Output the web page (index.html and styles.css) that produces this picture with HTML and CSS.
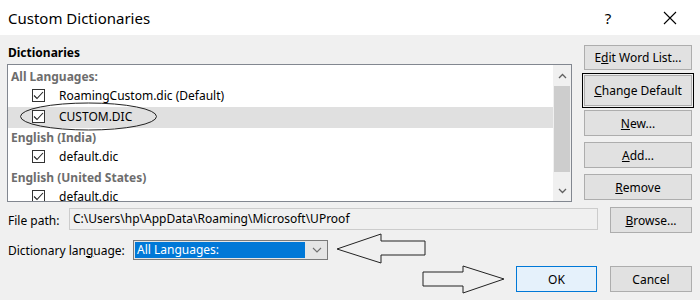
FILE: index.html
```html
<!DOCTYPE html>
<html lang="en">
<head>
    <meta charset="UTF-8">
    <title>Custom Dictionaries</title>
    <link rel="stylesheet" href="styles.css">
</head>
<body>
<div class="window">
    <div class="titlebar">
        <span class="title">Custom Dictionaries</span>
        <span class="title-help">?</span>
        <span class="title-close">
            <svg width="14" height="14" viewBox="0 0 14 14"><path d="M1 1 L13 13 M13 1 L1 13" stroke="#000" stroke-width="1.1" fill="none"/></svg>
        </span>
    </div>

    <div class="dialog">
        <div class="top-section">
            <div class="dict-column">
                <div class="group-label">Dictionaries</div>
                <div class="listbox">
                    <div class="list-rows">
                        <div class="list-header">All Languages:</div>
                        <div class="list-item"><span class="checkbox"><svg width="11" height="9" viewBox="0 0 11 9"><path d="M1 4.5 L4 7.5 L10 1" stroke="#222" stroke-width="1.1" fill="none"/></svg></span>RoamingCustom.dic (Default)</div>
                        <div class="list-item selected"><span class="checkbox"><svg width="11" height="9" viewBox="0 0 11 9"><path d="M1 4.5 L4 7.5 L10 1" stroke="#222" stroke-width="1.1" fill="none"/></svg></span>CUSTOM.DIC</div>
                        <div class="list-header">English (India)</div>
                        <div class="list-item"><span class="checkbox"><svg width="11" height="9" viewBox="0 0 11 9"><path d="M1 4.5 L4 7.5 L10 1" stroke="#222" stroke-width="1.1" fill="none"/></svg></span>default.dic</div>
                        <div class="list-header">English (United States)</div>
                        <div class="list-item"><span class="checkbox"><svg width="11" height="9" viewBox="0 0 11 9"><path d="M1 4.5 L4 7.5 L10 1" stroke="#222" stroke-width="1.1" fill="none"/></svg></span>default.dic</div>
                    </div>
                    <div class="scrollbar">
                        <div class="scroll-arrow">
                            <svg width="9" height="6" viewBox="0 0 9 6"><path d="M1 5 L4.5 1.5 L8 5" stroke="#606060" stroke-width="1.3" fill="none"/></svg>
                        </div>
                        <div class="scroll-track"><div class="scroll-thumb"></div></div>
                        <div class="scroll-arrow">
                            <svg width="9" height="6" viewBox="0 0 9 6"><path d="M1 1 L4.5 4.5 L8 1" stroke="#606060" stroke-width="1.3" fill="none"/></svg>
                        </div>
                    </div>
                </div>
            </div>
            <div class="side-buttons">
                <button class="btn btn-edit">E<u>d</u>it Word List...</button>
                <button class="btn btn-default">Change Default</button>
                <button class="btn btn-new"><u>N</u>ew...</button>
                <button class="btn btn-add"><u>A</u>dd...</button>
                <button class="btn btn-remove"><u>R</u>emove</button>
            </div>
        </div>

        <div class="path-row">
            <span class="path-label">File path:</span>
            <div class="path-field">C:\Users\hp\AppData\Roaming\Microsoft\UProof</div>
            <button class="btn btn-browse"><u>B</u>rowse...</button>
        </div>

        <div class="lang-row">
            <span class="lang-label">Dictionary lan<u>g</u>uage:</span>
            <div class="select">
                <span class="select-value">All Languages:</span>
                <span class="select-arrow">
                    <svg width="10" height="6" viewBox="0 0 10 6"><path d="M1 1 L5 5 L9 1" stroke="#707070" stroke-width="1.1" fill="none"/></svg>
                </span>
            </div>
        </div>

        <div class="footer-row">
            <button class="btn btn-ok">OK</button>
            <button class="btn btn-cancel">Cancel</button>
        </div>
    </div>

    <!-- hand drawn annotations on top of the dialog -->
    <svg class="annotations" width="700" height="300" viewBox="0 0 700 300">
        <ellipse cx="88.5" cy="116.5" rx="68" ry="13.5" stroke="#222" stroke-width="1" fill="none"/>
        <polygon points="337,249 381,234 381,241 425,241 425,255 381,255 381,263" stroke="#222" stroke-width="1" fill="none"/>
        <polygon points="423,272 463,272 463,266 504,279 463,293 463,286 423,286" stroke="#222" stroke-width="1" fill="none"/>
    </svg>
</div>
</body>
</html>
```

FILE: styles.css
```css
body {
    margin: 0;
    font-family: 'Noto Sans', 'Liberation Sans', sans-serif;
    font-size: 12px;
    color: #000;
    background-color: #f0f0f0;
}
.window {
    position: relative;
    width: 700px;
    height: 300px;
    overflow: hidden;
    background-color: #f0f0f0;
}
.titlebar {
    height: 35px;
    background-color: #ffffff;
    display: flex;
    align-items: center;
    padding-left: 8px;
}
.title {
    font-size: 15px;
    flex: 1;
}
.title-help {
    font-size: 15px;
    width: 50px;
    margin-right: 14px;
    text-align: center;
}
.title-close {
    width: 46px;
    margin-right: 7px;
    display: flex;
    justify-content: center;
}

.dialog {
    padding: 10px 8px 0 7px;
}
.top-section {
    display: flex;
    gap: 12px;
}
.dict-column {
    width: 565px;
}
.group-label {
    font-weight: bold;
    height: 19px;
    line-height: 15px;
    padding-left: 1px;
}
.listbox {
    height: 138px;
    box-sizing: border-box;
    border: 1px solid #828790;
    background-color: #ffffff;
    display: flex;
}
.list-rows {
    flex: 1;
    overflow: hidden;
    padding-top: 2px;
}
.list-header,
.list-item {
    display: flex;
    align-items: center;
}
.list-header {
    height: 19px;
    color: #6d6d6d;
    font-weight: bold;
    padding-left: 3px;
}
.list-item {
    height: 21px;
    box-sizing: border-box;
    padding-left: 24px;
    padding-bottom: 3px;
}
.list-item.selected {
    background-color: #e0e0e0;
}
.checkbox {
    width: 13px;
    height: 13px;
    box-sizing: border-box;
    border: 1px solid #333;
    background-color: #fff;
    margin-right: 14px;
    display: flex;
    align-items: center;
    justify-content: center;
}
.scrollbar {
    width: 18px;
    background-color: #f0f0f0;
    display: flex;
    flex-direction: column;
}
.scroll-arrow {
    height: 21px;
    display: flex;
    align-items: center;
    justify-content: center;
}
.scroll-track {
    flex: 1;
    padding: 0 1px;
}
.scroll-thumb {
    height: 86px;
    background-color: #cdcdcd;
}

.side-buttons {
    width: 108px;
    display: flex;
    flex-direction: column;
}
.btn {
    font-family: 'Noto Sans', 'Liberation Sans', sans-serif;
    font-size: 12px;
    color: #000;
    background-color: #e1e1e1;
    border: 1px solid #adadad;
    padding: 0;
    height: 26px;
    width: 100%;
}
.btn-edit {
    height: 25px;
}
.btn-default {
    height: 31px;
    margin-top: 5px;
    outline: 1px solid #000;
    outline-offset: 1px;
}
.btn-default::first-letter {
    text-decoration: underline;
}
.btn-new {
    margin-top: 4px;
}
.btn-add,
.btn-remove {
    margin-top: 6px;
}

.path-row {
    display: flex;
    align-items: center;
    margin-top: 5px;
    padding-left: 1px;
}
.path-label {
    width: 61px;
}
.path-field {
    width: 529px;
    height: 22px;
    box-sizing: border-box;
    border: 1px solid #cccccc;
    padding-left: 3px;
    line-height: 20px;
    margin-top: -3px;
}
.btn-browse {
    width: 82px;
    margin-left: 12px;
}

.lang-row {
    display: flex;
    align-items: center;
    margin-top: 7px;
    padding-left: 1px;
}
.lang-label {
    width: 125px;
}
.select {
    width: 195px;
    height: 20px;
    box-sizing: border-box;
    border: 1px solid #7a7a7a;
    background-color: #e5e5e5;
    display: flex;
}
.select-value {
    flex: 1;
    background-color: #0078d7;
    color: #fff;
    margin: 1px;
    padding-left: 2px;
    line-height: 16px;
}
.select-arrow {
    width: 21px;
    display: flex;
    align-items: center;
    justify-content: center;
}

.footer-row {
    display: flex;
    justify-content: flex-end;
    gap: 13px;
    margin-top: 6px;
}
.btn-ok {
    width: 81px;
    background-color: #e5f1fb;
    border-color: #0078d7;
}
.btn-cancel {
    width: 82px;
}

.annotations {
    position: absolute;
    top: 0;
    left: 0;
    pointer-events: none;
}
```
